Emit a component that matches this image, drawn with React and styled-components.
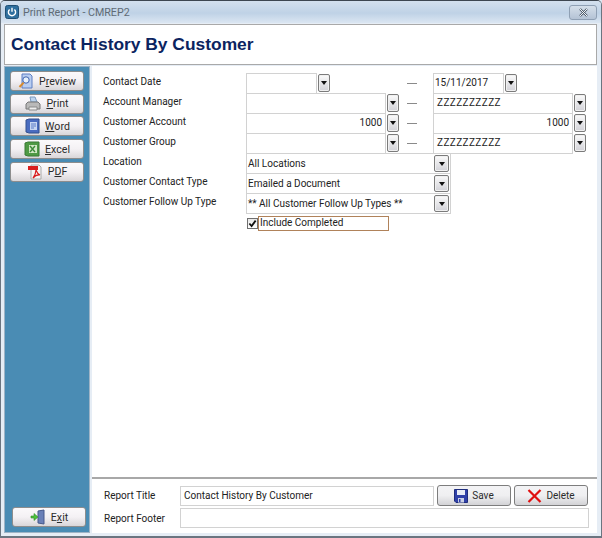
import React from "react";
import styled, { createGlobalStyle } from "styled-components";

const GlobalStyle = createGlobalStyle`
  html, body {
    margin: 0;
    padding: 0;
    background: #dfe8f2;
  }
  * {
    box-sizing: border-box;
  }
`;

const Window = styled.div`
  width: 602px;
  height: 538px;
  display: flex;
  flex-direction: column;
  overflow: hidden;
  font-family: Roboto, "Liberation Sans", Arial, sans-serif;
  font-size: 10px;
  color: #222;
  background: #e6edf5;
  border: 1px solid #6b7580;
  border-top-color: #3d4650;
  border-radius: 5px 5px 0 0;
  border-bottom-width: 2px;
`;

const TitleBar = styled.div`
  height: 22px;
  flex-shrink: 0;
  display: flex;
  align-items: center;
  padding: 0 4px;
  gap: 4px;
  background: linear-gradient(#d3e0ee, #bfd2e6 55%, #dbe6f2);
`;

const TitleText = styled.span`
  flex: 1;
  font-size: 10.7px;
  color: #5f6b75;
`;

const CloseButton = styled.div`
  width: 28px;
  height: 15px;
  display: flex;
  align-items: center;
  justify-content: center;
  border: 1px solid #8fa0b4;
  border-radius: 3px;
  background: linear-gradient(#d5dfea, #b4c3d5);
`;

const Header = styled.div`
  height: 41px;
  flex-shrink: 0;
  margin: 1px 4px 0 3px;
  padding-left: 6px;
  display: flex;
  align-items: center;
  background: #fff;
  border: 1px solid #a9a9a9;
`;

const HeaderTitle = styled.h1`
  margin: 0;
  font-family: "Liberation Sans", Arial, sans-serif;
  font-size: 17.4px;
  font-weight: 700;
  color: #0b2460;
`;

const Body = styled.div`
  flex: 1;
  min-height: 0;
  display: flex;
  margin: 1px 4px 3px 3px;
  gap: 2px;
`;

const Sidebar = styled.div`
  width: 86px;
  flex-shrink: 0;
  display: flex;
  flex-direction: column;
  gap: 2.7px;
  padding: 4px 0 5px 5px;
  background: #4a8cb4;
  border: 1px solid #9fb4c6;
`;

const SideButton = styled.div`
  width: 74px;
  height: 20px;
  flex-shrink: 0;
  display: flex;
  align-items: center;
  justify-content: center;
  gap: 5px;
  font-size: 10.6px;
  margin-left: ${(p) => (p.$shift ? "2px" : "0")};
  margin-top: ${(p) => (p.$bottom ? "auto" : "0")};
  border: 1px solid #8d8d8d;
  border-radius: 3px;
  background: linear-gradient(#fbf9fb, #f4f1f4 50%, #d9d6d9);
  color: #2b2b2b;
`;

const Main = styled.div`
  flex: 1;
  min-width: 0;
  display: flex;
  flex-direction: column;
  background: #fff;
`;

const Form = styled.div`
  flex: 1;
  padding: 7px 0 0 11px;
  display: flex;
  flex-direction: column;
`;

const Row = styled.div`
  height: 20px;
  display: flex;
  align-items: flex-start;
`;

const Label = styled.div`
  width: 143px;
  flex-shrink: 0;
  padding-top: 3px;
`;

const Field = styled.div`
  width: ${(p) => p.$w}px;
  height: 21px;
  flex-shrink: 0;
  padding: 0 ${(p) => (p.$right ? "3px" : p.$spaced ? "3px" : "1px")} 2px;
  display: flex;
  align-items: center;
  justify-content: ${(p) => (p.$right ? "flex-end" : "flex-start")};
  background: #fff;
  border: 1px solid #d2d2d2;
  letter-spacing: ${(p) => (p.$spaced ? "0.4px" : "0")};
  white-space: nowrap;
  overflow: hidden;
`;

const ComboField = styled(Field)`
  justify-content: space-between;
  padding: 0 1px 0 1px;
`;

const ComboText = styled.span`
  padding-bottom: 1px;
`;

const ArrowButton = styled.div`
  width: ${(p) => (p.$wide ? "15px" : "12px")};
  height: ${(p) => (p.$wide ? "17px" : "18px")};
  flex-shrink: 0;
  margin-left: ${(p) => (p.$wide ? "0" : "1px")};
  margin-top: ${(p) => (p.$wide ? "0" : "1px")};
  display: flex;
  align-items: center;
  justify-content: center;
  border: 1px solid #7b7b7b;
  border-radius: 2px;
  background: linear-gradient(#fbfbfb, #d2d2d8);
  box-shadow: inset 0 0 0 1px #f0f0f0;

  &::before {
    content: "";
    border-left: 3.5px solid transparent;
    border-right: 3.5px solid transparent;
    border-top: 4px solid #111;
  }
`;

const Dash = styled.div`
  width: ${(p) => p.$w}px;
  flex-shrink: 0;
  height: 20px;
  display: flex;
  align-items: center;
  padding-left: ${(p) => p.$pad}px;

  &::before {
    content: "";
    width: 10px;
    height: 1px;
    margin-top: 1px;
    background: #8a8a8a;
  }
`;

const CheckRow = styled.div`
  display: flex;
  align-items: center;
  height: 16px;
  margin-left: 143px;
  margin-top: 2px;
`;

const CheckBox = styled.div`
  width: 11px;
  height: 11px;
  margin-left: 1px;
  display: flex;
  align-items: center;
  justify-content: center;
  border: 1px solid #6f6f6f;
  background: linear-gradient(#e8e8e8, #fff);
`;

const CheckLabel = styled.div`
  width: 131px;
  height: 15px;
  padding: 0 0 1px 1px;
  display: flex;
  align-items: center;
  border: 1px solid #b0825a;
`;

const Footer = styled.div`
  flex-shrink: 0;
  height: 56px;
  padding: 6px 0 0 12px;
  display: flex;
  flex-direction: column;
  gap: 2px;
  border-top: 2px solid #a8a8a8;
`;

const FooterRow = styled.div`
  display: flex;
  align-items: center;
  gap: 3px;
`;

const FooterLabel = styled.div`
  width: 76px;
  flex-shrink: 0;
`;

const FooterField = styled.div`
  width: ${(p) => p.$w}px;
  height: 20px;
  margin-left: -3px;
  padding: 0 3px;
  display: flex;
  align-items: center;
  border: 1px solid #d2d2d2;
`;

const ActionButton = styled.div`
  width: 74px;
  height: 21px;
  display: flex;
  align-items: center;
  justify-content: center;
  gap: 4px;
  border: 1px solid #7d7d7d;
  border-radius: 3px;
  background: linear-gradient(#f3f3f5, #efeff1 50%, #d3d3d6);
  color: #2b2b2b;
`;

const PowerIcon = () => (
  <svg width="14" height="14" viewBox="0 0 14 14">
    <rect x="0.5" y="0.5" width="13" height="13" rx="2" fill="#2f6f9e" stroke="#1f4f74" />
    <path d="M4.6 4.4a3.6 3.6 0 1 0 4.8 0" fill="none" stroke="#fff" strokeWidth="1.4" />
    <path d="M7 2.8v4" stroke="#fff" strokeWidth="1.4" />
  </svg>
);

const CloseIcon = () => (
  <svg width="11" height="9" viewBox="0 0 11 9">
    <path d="M2 1l7 7M9 1l-7 7" stroke="#4d5a68" strokeWidth="2.2" />
    <path d="M2 1l7 7M9 1l-7 7" stroke="#f2f5f8" strokeWidth="1" />
  </svg>
);

const PreviewIcon = () => (
  <svg width="16" height="16" viewBox="0 0 16 16">
    <path d="M4 1h8l2 2v12H4z" fill="#b9cdf0" stroke="#5c7fc4" />
    <circle cx="8" cy="7" r="3.2" fill="#e8f1fb" stroke="#3f64b0" />
    <path d="M5.6 9.6L1.5 14" stroke="#d98a2c" strokeWidth="2" />
  </svg>
);

const PrintIcon = () => (
  <svg width="16" height="16" viewBox="0 0 16 16">
    <path d="M5 1h5l2 5H6z" fill="#bcd4ef" stroke="#7c9cc0" />
    <path d="M1 8l2-2h10l2 2v5H1z" fill="#b9b9b9" stroke="#777" />
    <path d="M4 11h8v3H4z" fill="#eee" stroke="#8a8a8a" />
  </svg>
);

const WordIcon = () => (
  <svg width="16" height="16" viewBox="0 0 16 16">
    <path d="M2 2l3-1h10v14H5l-3-1z" fill="#4a6cc0" stroke="#33508f" />
    <rect x="6" y="4" width="7" height="8" fill="#c7d6f2" />
    <path d="M7 6h5M7 8h5M7 10h3" stroke="#5a7cc8" />
  </svg>
);

const ExcelIcon = () => (
  <svg width="16" height="16" viewBox="0 0 16 16">
    <path d="M1 2l3-1h11v14H4l-3-1z" fill="#4f9a45" stroke="#3a7a35" />
    <rect x="5" y="4" width="8" height="8" fill="#d3e8c6" />
    <path d="M6 5l5 6M11 5l-5 6" stroke="#3d8a3a" strokeWidth="1.4" />
  </svg>
);

const PdfIcon = () => (
  <svg width="16" height="16" viewBox="0 0 16 16">
    <path d="M4 1h8l2 2v12H4z" fill="#f4f4f4" stroke="#aaa" />
    <rect x="1" y="2" width="10" height="4" fill="#d81e1e" />
    <path d="M6 14c2-3 3-6 3-8 1 3 2 4 4 5-3-.4-5 .6-7 3z" fill="none" stroke="#d81e1e" strokeWidth="1.2" />
  </svg>
);

const ExitIcon = () => (
  <svg width="16" height="16" viewBox="0 0 16 16">
    <path d="M8 2l6-1v14l-6-1z" fill="#6a80b8" stroke="#46598c" />
    <path d="M1 7h3V4.500L8 8l-4 3.500V9H1z" fill="#4cc23c" stroke="#2f8a28" strokeWidth="0.6" />
  </svg>
);

const SaveIcon = () => (
  <svg width="14" height="14" viewBox="0 0 14 14">
    <path d="M0.500 0.500h13v13H2l-1.500-1.500z" fill="#2f40a8" stroke="#1f2d7c" />
    <rect x="3" y="1" width="8" height="5" fill="#e8ecf6" />
    <rect x="4" y="9" width="6" height="4.500" fill="#c9cfe4" />
    <rect x="5" y="10" width="1.500" height="3" fill="#2f40a8" />
  </svg>
);

const DeleteIcon = () => (
  <svg width="15" height="14" viewBox="0 0 15 14">
    <path d="M1.500 1l12 12M13.500 1l-12 12" stroke="#e01010" strokeWidth="2.2" />
  </svg>
);

const CheckMark = () => (
  <svg width="9" height="9" viewBox="0 0 10 10">
    <path d="M1.500 5l2.500 2.800L8.500 1.800" fill="none" stroke="#111" strokeWidth="2" />
  </svg>
);

const sideButtons = [
  { key: "preview", icon: <PreviewIcon />, label: <span>P<u>r</u>eview</span> },
  { key: "print", icon: <PrintIcon />, label: <span><u>P</u>rint</span> },
  { key: "word", icon: <WordIcon />, label: <span><u>W</u>ord</span> },
  { key: "excel", icon: <ExcelIcon />, label: <span><u>E</u>xcel</span> },
  { key: "pdf", icon: <PdfIcon />, label: <span>P<u>D</u>F</span> },
];

const App = () => (
  <>
    <GlobalStyle />
    <Window>
      <TitleBar>
        <PowerIcon />
        <TitleText>Print Report - CMREP2</TitleText>
        <CloseButton>
          <CloseIcon />
        </CloseButton>
      </TitleBar>
      <Header>
        <HeaderTitle>Contact History By Customer</HeaderTitle>
      </Header>
      <Body>
        <Sidebar>
          {sideButtons.map((b) => (
            <SideButton key={b.key}>
              {b.icon}
              {b.label}
            </SideButton>
          ))}
          <SideButton $bottom $shift>
            <ExitIcon />
            <span>E<u>x</u>it</span>
          </SideButton>
        </Sidebar>
        <Main>
          <Form>
            <Row>
              <Label>Contact Date</Label>
              <Field $w={71} />
              <ArrowButton />
              <Dash $w={103} $pad={77} />
              <Field $w={71}>15/11/2017</Field>
              <ArrowButton />
            </Row>
            <Row>
              <Label>Account Manager</Label>
              <Field $w={140} />
              <ArrowButton />
              <Dash $w={34} $pad={8} />
              <Field $w={140} $spaced>ZZZZZZZZZZ</Field>
              <ArrowButton />
            </Row>
            <Row>
              <Label>Customer Account</Label>
              <Field $w={140} $right>1000</Field>
              <ArrowButton />
              <Dash $w={34} $pad={8} />
              <Field $w={140} $right>1000</Field>
              <ArrowButton />
            </Row>
            <Row>
              <Label>Customer Group</Label>
              <Field $w={140} />
              <ArrowButton />
              <Dash $w={34} $pad={8} />
              <Field $w={140} $spaced>ZZZZZZZZZZ</Field>
              <ArrowButton />
            </Row>
            <Row>
              <Label>Location</Label>
              <ComboField $w={205}>
                <ComboText>All Locations</ComboText>
                <ArrowButton $wide />
              </ComboField>
            </Row>
            <Row>
              <Label>Customer Contact Type</Label>
              <ComboField $w={205}>
                <ComboText>Emailed a Document</ComboText>
                <ArrowButton $wide />
              </ComboField>
            </Row>
            <Row>
              <Label>Customer Follow Up Type</Label>
              <ComboField $w={205}>
                <ComboText>** All Customer Follow Up Types **</ComboText>
                <ArrowButton $wide />
              </ComboField>
            </Row>
            <CheckRow>
              <CheckBox>
                <CheckMark />
              </CheckBox>
              <CheckLabel>Include Completed</CheckLabel>
            </CheckRow>
          </Form>
          <Footer>
            <FooterRow>
              <FooterLabel>Report Title</FooterLabel>
              <FooterField $w={254}>Contact History By Customer</FooterField>
              <ActionButton>
                <SaveIcon />
                Save
              </ActionButton>
              <ActionButton>
                <DeleteIcon />
                Delete
              </ActionButton>
            </FooterRow>
            <FooterRow>
              <FooterLabel>Report Footer</FooterLabel>
              <FooterField $w={409} />
            </FooterRow>
          </Footer>
        </Main>
      </Body>
    </Window>
  </>
);

export default App;
